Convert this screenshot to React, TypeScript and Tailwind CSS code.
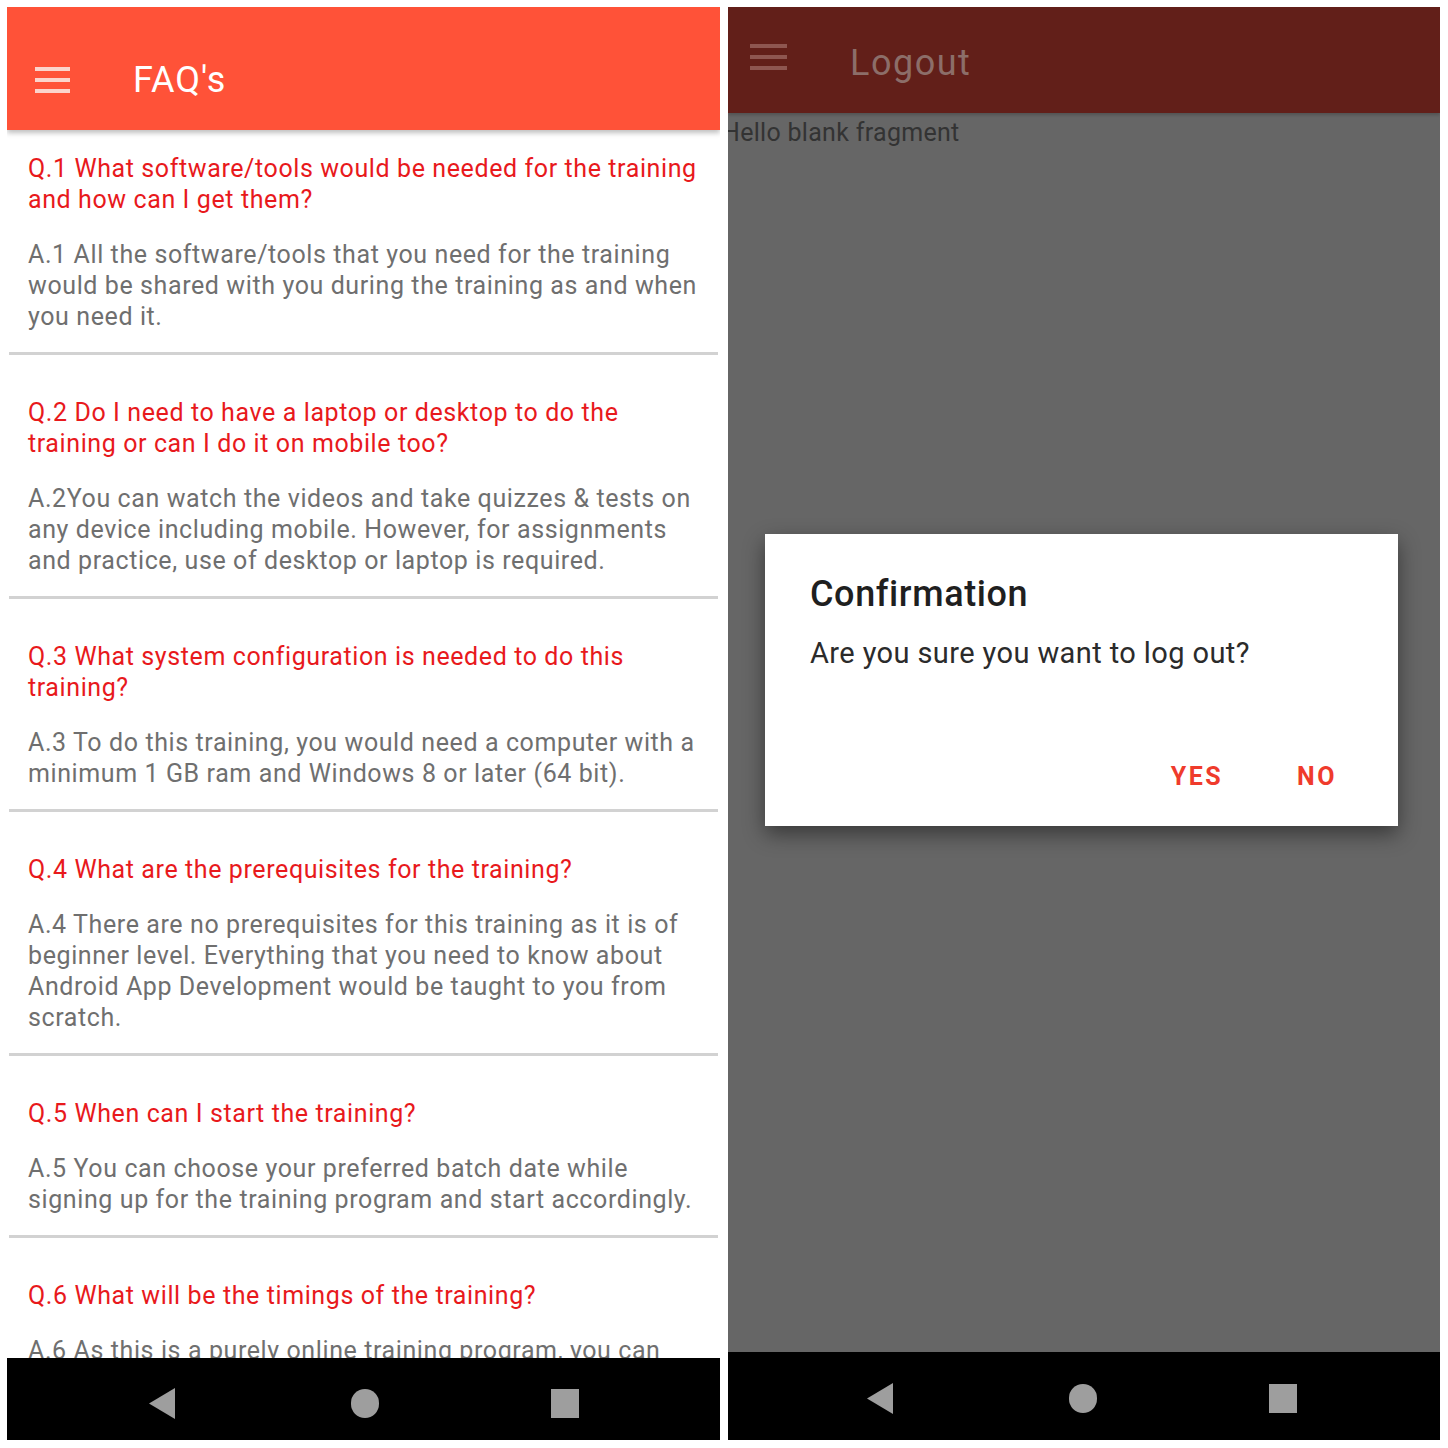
import React from "react";

const faqs = [
  {
    q: ["Q.1 What software/tools would be needed for the training", "and how can I get them?"],
    a: ["A.1 All the software/tools that you need for the training", "would be shared with you during the training as and when", "you need it."],
  },
  {
    q: ["Q.2 Do I need to have a laptop or desktop to do the", "training or can I do it on mobile too?"],
    a: ["A.2You can watch the videos and take quizzes & tests on", "any device including mobile. However, for assignments", "and practice, use of desktop or laptop is required."],
  },
  {
    q: ["Q.3 What system configuration is needed to do this", "training?"],
    a: ["A.3 To do this training, you would need a computer with a", "minimum 1 GB ram and Windows 8 or later (64 bit)."],
  },
  {
    q: ["Q.4 What are the prerequisites for the training?"],
    a: ["A.4 There are no prerequisites for this training as it is of", "beginner level. Everything that you need to know about", "Android App Development would be taught to you from", "scratch."],
  },
  {
    q: ["Q.5 When can I start the training?"],
    a: ["A.5 You can choose your preferred batch date while", "signing up for the training program and start accordingly."],
  },
  {
    q: ["Q.6 What will be the timings of the training?"],
    a: ["A.6 As this is a purely online training program, you can", "attend the sessions at any time."],
  },
];

function Hamburger({ color }: { color: string }) {
  return (
    <svg width="37" height="28" viewBox="0 0 37 28">
      <rect x="0" y="1" width="37" height="4" fill={color} />
      <rect x="0" y="12" width="37" height="4" fill={color} />
      <rect x="0" y="23" width="37" height="4" fill={color} />
    </svg>
  );
}

function NavBar({ cls }: { cls: string }) {
  return (
    <div className={`bg-black flex items-center shrink-0 ${cls}`}>
      <svg width="28" height="31" viewBox="0 0 28 31">
        <polygon points="27,0 27,31 1,15.5" fill="#9e9e9e" />
      </svg>
      <div className="w-[175px]" />
      <div className="w-[28px] h-[29px] rounded-full bg-[#9e9e9e]" />
      <div className="w-[172px]" />
      <div className="w-[28px] h-[29px] bg-[#9e9e9e]" />
    </div>
  );
}

export default function App() {
  return (
    <div
      className="w-[1448px] h-[1448px] bg-white flex gap-[8px] pl-[7px] pt-[7px]"
      style={{ fontFamily: "Roboto, 'Noto Sans', sans-serif" }}
    >
      {/* Left panel */}
      <div className="w-[713px] h-[1433px] flex flex-col overflow-hidden bg-white">
        <div className="h-[123px] bg-[#ff5238] shrink-0 flex items-center pl-[28px] pt-[22px] shadow-[0_3px_5px_rgba(0,0,0,0.25)] relative z-10">
          <div className="w-[35px]">
            <svg width="35" height="26" viewBox="0 0 35 26">
              <rect x="0" y="0" width="35" height="4" fill="#fbd4cc" />
              <rect x="0" y="11" width="35" height="4" fill="#fbd4cc" />
              <rect x="0" y="22" width="35" height="4" fill="#fbd4cc" />
            </svg>
          </div>
          <div className="ml-[63px] text-white text-[36px] tracking-[1px] leading-none">FAQ's</div>
        </div>
        <div className="flex-1 overflow-hidden pt-[23px]">
          {faqs.map((f, i) => (
            <div key={i}>
              <div className="px-[21px]">
                <div className="text-[#e8191c] text-[25px] tracking-[0.6px] leading-[31px] whitespace-nowrap">
                  {f.q.map((l, j) => (
                    <div key={j}>{l}</div>
                  ))}
                </div>
                <div className="mt-[24px] text-[#6f6f6f] text-[25px] tracking-[0.6px] leading-[31px] whitespace-nowrap">
                  {f.a.map((l, j) => (
                    <div key={j}>{l}</div>
                  ))}
                </div>
              </div>
              <div className="mt-[20px] mb-[42px] mx-[2px] h-[3px] bg-[#d2d2d2]" />
            </div>
          ))}
        </div>
        <NavBar cls="h-[82px] pl-[141px] pt-[8px]" />
      </div>

      {/* Right panel */}
      <div className="w-[712px] h-[1433px] flex flex-col overflow-hidden bg-[#666666] relative">
        <div className="h-[106px] bg-[#621f19] shrink-0 flex items-center pl-[22px] shadow-[0_2px_3px_rgba(0,0,0,0.2)]">
          <div className="w-[37px] -mt-[6px]">
            <Hamburger color="#8e5650" />
          </div>
          <div className="ml-[63px] text-[#8c6e69] text-[36px] tracking-[1.5px] leading-none mt-[6px]">Logout</div>
        </div>
        <div className="flex-1 relative">
          <div className="-ml-[6px] mt-[4px] text-[#333333] text-[25px] tracking-[0.3px] leading-[31px] whitespace-nowrap">
            Hello blank fragment
          </div>
          <div className="absolute left-[37px] top-[421px] w-[633px] h-[292px] bg-white shadow-[0_8px_20px_rgba(0,0,0,0.45)] flex flex-col">
            <div className="pl-[45px] pt-[40px] text-[#1f1f1f] text-[36px] tracking-[0.6px] leading-[40px] font-medium">Confirmation</div>
            <div className="pl-[45px] mt-[22px] text-[#2b2b2b] text-[29px] tracking-[0.4px] leading-[34px]">
              Are you sure you want to log out?
            </div>
            <div className="flex justify-end mt-[94px] pr-[61px] gap-[74px] text-[#ef3b2c] text-[25px] font-bold tracking-[2.5px] leading-none">
              <span>YES</span>
              <span>NO</span>
            </div>
          </div>
        </div>
        <NavBar cls="h-[88px] pl-[138px] pt-[4px]" />
      </div>
    </div>
  );
}
